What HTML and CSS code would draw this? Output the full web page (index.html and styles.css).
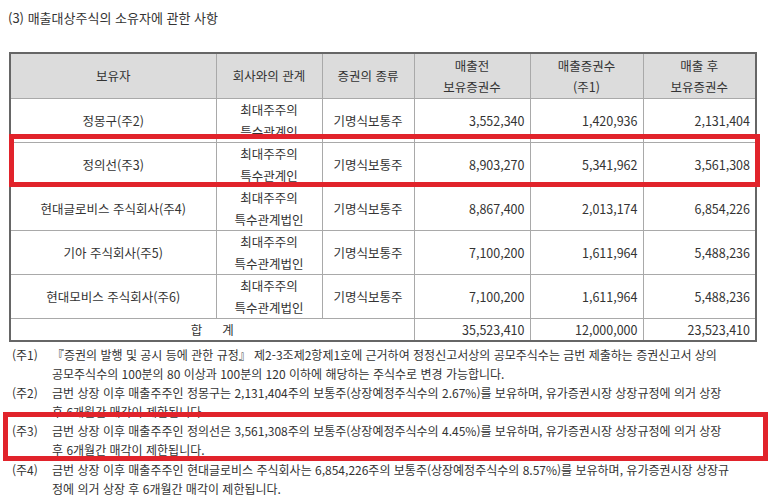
FILE: index.html
```html
<!DOCTYPE html>
<html lang="ko">
<head>
<meta charset="utf-8">
<title>매출대상주식의 소유자에 관한 사항</title>
<link rel="stylesheet" href="styles.css">
</head>
<body>
<div class="page">
  <h3 class="title">(3) 매출대상주식의 소유자에 관한 사항</h3>
  <div class="table-wrap">
    <table class="holders">
      <colgroup>
        <col class="c1"><col class="c2"><col class="c3"><col class="c4"><col class="c5"><col class="c6">
      </colgroup>
      <thead>
        <tr>
          <th>보유자</th>
          <th>회사와의 관계</th>
          <th>증권의 종류</th>
          <th>매출전<br>보유증권수</th>
          <th>매출증권수<br>(주1)</th>
          <th>매출 후<br>보유증권수</th>
        </tr>
      </thead>
      <tbody>
        <tr>
          <td class="ctr">정몽구(주2)</td>
          <td class="ctr">최대주주의<br>특수관계인</td>
          <td class="ctr">기명식보통주</td>
          <td class="num">3,552,340</td>
          <td class="num">1,420,936</td>
          <td class="num">2,131,404</td>
        </tr>
        <tr>
          <td class="ctr">정의선(주3)</td>
          <td class="ctr">최대주주의<br>특수관계인</td>
          <td class="ctr">기명식보통주</td>
          <td class="num">8,903,270</td>
          <td class="num">5,341,962</td>
          <td class="num">3,561,308</td>
        </tr>
        <tr>
          <td class="ctr">현대글로비스 주식회사(주4)</td>
          <td class="ctr">최대주주의<br>특수관계법인</td>
          <td class="ctr">기명식보통주</td>
          <td class="num">8,867,400</td>
          <td class="num">2,013,174</td>
          <td class="num">6,854,226</td>
        </tr>
        <tr>
          <td class="ctr">기아 주식회사(주5)</td>
          <td class="ctr">최대주주의<br>특수관계법인</td>
          <td class="ctr">기명식보통주</td>
          <td class="num">7,100,200</td>
          <td class="num">1,611,964</td>
          <td class="num">5,488,236</td>
        </tr>
        <tr>
          <td class="ctr">현대모비스 주식회사(주6)</td>
          <td class="ctr">최대주주의<br>특수관계법인</td>
          <td class="ctr">기명식보통주</td>
          <td class="num">7,100,200</td>
          <td class="num">1,611,964</td>
          <td class="num">5,488,236</td>
        </tr>
        <tr class="total">
          <td class="ctr" colspan="3">합<span class="gap"></span>계</td>
          <td class="num">35,523,410</td>
          <td class="num">12,000,000</td>
          <td class="num">23,523,410</td>
        </tr>
      </tbody>
    </table>
    <div class="mark mark-row"></div>
  </div>

  <div class="notes">
    <div class="note">
      <span class="label">(주1)</span>
      <span class="text">『증권의 발행 및 공시 등에 관한 규정』 제2-3조제2항제1호에 근거하여 정정신고서상의 공모주식수는 금번 제출하는 증권신고서 상의<br>공모주식수의 100분의 80 이상과 100분의 120 이하에 해당하는 주식수로 변경 가능합니다.</span>
    </div>
    <div class="note">
      <span class="label">(주2)</span>
      <span class="text">금번 상장 이후 매출주주인 정몽구는 2,131,404주의 보통주(상장예정주식수의 2.67%)를 보유하며, 유가증권시장 상장규정에 의거 상장<br>후 6개월간 매각이 제한됩니다.</span>
    </div>
    <div class="note note-marked">
      <span class="label">(주3)</span>
      <span class="text">금번 상장 이후 매출주주인 정의선은 3,561,308주의 보통주(상장예정주식수의 4.45%)를 보유하며, 유가증권시장 상장규정에 의거 상장<br>후 6개월간 매각이 제한됩니다.</span>
      <div class="mark mark-note"></div>
    </div>
    <div class="note">
      <span class="label">(주4)</span>
      <span class="text">금번 상장 이후 매출주주인 현대글로비스 주식회사는 6,854,226주의 보통주(상장예정주식수의 8.57%)를 보유하며, 유가증권시장 상장규<br>정에 의거 상장 후 6개월간 매각이 제한됩니다.</span>
    </div>
  </div>
</div>
</body>
</html>
```
FILE: styles.css
```css
html, body {
  margin: 0;
  padding: 0;
  background: #ffffff;
}

.page {
  font-family: "Noto Sans CJK KR", "Noto Sans", "DejaVu Sans", sans-serif;
  color: #333333;
  width: 773px;
}

.title {
  margin: 8px 0 24px 8px;
  font-size: 13px;
  font-weight: normal;
  line-height: 20px;
  color: #333333;
}

.table-wrap {
  position: relative;
  margin-left: 9px;
  width: 746px;
}

.holders {
  border-collapse: collapse;
  table-layout: fixed;
  width: 746px;
  font-size: 12.5px;
  line-height: 21.5px;
  border: 2px solid #666666;
}

.c1 { width: 206px; }
.c2 { width: 106px; }
.c3 { width: 92px; }
.c4 { width: 116px; }
.c5 { width: 113px; }
.c6 { width: 113px; }

.holders th,
.holders td {
  border: 1px solid #a9a9a9;
  padding: 0;
  white-space: nowrap;
  overflow: hidden;
}

.holders th {
  height: 44px;
  background: #dcdcdc;
  font-weight: normal;
  text-align: center;
  vertical-align: middle;
}

.holders thead tr {
  border-bottom: 1px solid #8a8a8a;
}

.holders td {
  height: 42px;
  vertical-align: middle;
}

.holders .total td {
  height: 21px;
  line-height: 20px;
}

.ctr { text-align: center; }

.num {
  text-align: right;
  padding-right: 5px !important;
}

.gap {
  display: inline-block;
  width: 20px;
}

.mark {
  position: absolute;
  border: 5px solid #e1232b;
  box-sizing: border-box;
  pointer-events: none;
}

.mark-row {
  left: 0;
  top: 82px;
  width: 751px;
  height: 53px;
}

.notes {
  margin: 3px 0 0 12px;
  width: 748px;
  font-size: 12px;
  line-height: 19.1px;
}

.note {
  display: grid;
  grid-template-columns: 40px 1fr;
  white-space: nowrap;
}

.note-marked {
  position: relative;
}

.mark-note {
  left: -9px;
  right: -8px;
  top: -9px;
  bottom: -1px;
}
```
